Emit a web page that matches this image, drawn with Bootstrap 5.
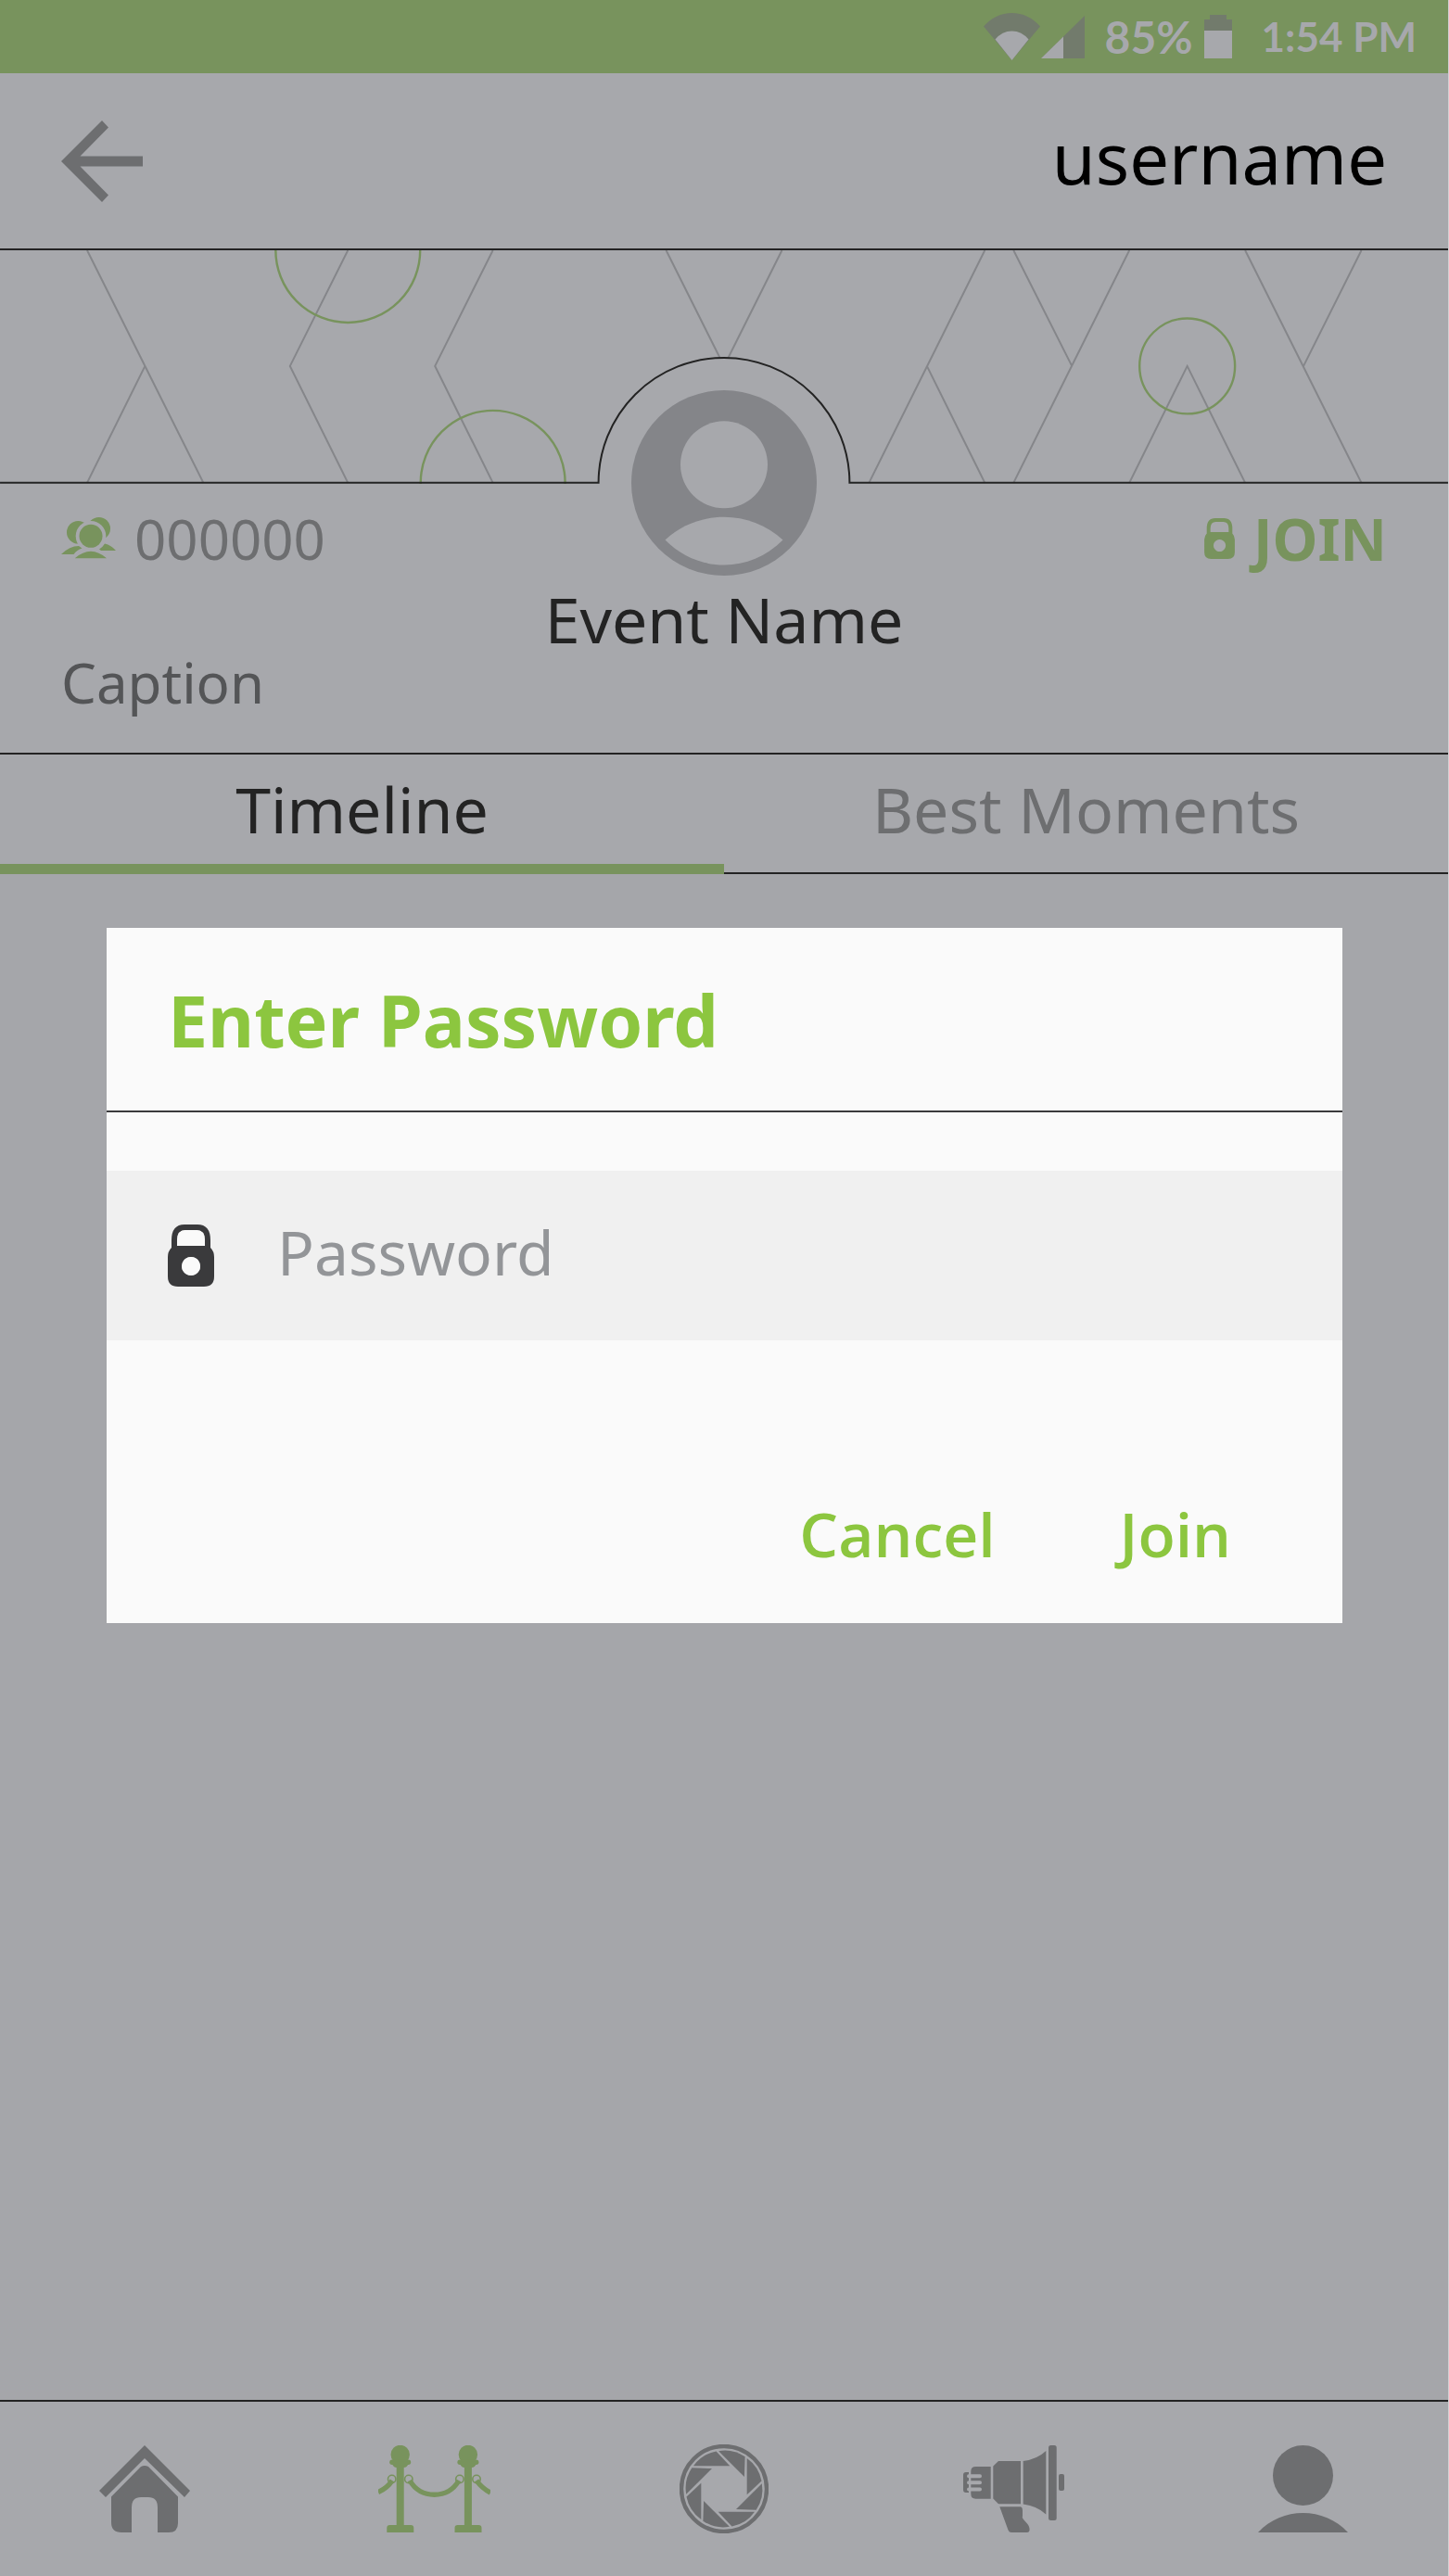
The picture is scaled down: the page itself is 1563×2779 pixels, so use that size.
<!DOCTYPE html>
<html lang="en">
<head>
<meta charset="utf-8">
<meta name="viewport" content="width=device-width, initial-scale=1">
<title>Event</title>
<link href="https://cdn.jsdelivr.net/npm/bootstrap@5.3.0/dist/css/bootstrap.min.css" rel="stylesheet">
<style>
  :root {
    --shade: #a7a8ac;
    --moss: #78935d;
    --ink: #232323;
    --slate: #6d6e70;
    --lime: #8cc63f;
  }
  body { font-family: "Noto Sans", "Open Sans", sans-serif; background: #a5a6aa; border-right: 1px solid #d0d1d3; font-size: 68px; line-height: 92px; color: var(--ink); }
  svg { display: block; flex: none; }
  .surface { background: var(--shade); }
  .gutter { padding-left: 66px; padding-right: 66px; }
  .status-strip { height: 79px; padding-right: 34px; background: var(--moss); color: var(--shade); font: 700 44px/79px Lato, sans-serif; }
  .status-level { margin-left: 22px; margin-right: 12px; font-size: 48px; }
  .status-time { margin-left: 32px; }
  .title-bar { height: 191px; border-bottom: 2px solid var(--ink); }
  .user-title { font-size: 76px; line-height: 92px; color: #000; }
  .plain-btn { background: none; border: 0; padding: 0; color: inherit; font: inherit; }
  .banner-art { width: 100%; height: auto; }
  .side-cell { flex: 1 1 0; gap: 20px; height: 118px; font-size: 60px; }
  .count-text { color: var(--slate); }
  .join-btn { gap: 20px; color: var(--moss); font-size: 62px; font-weight: 700; }
  .avatar-art { margin-top: -101px; margin-bottom: -100px; }
  .event-title { font-size: 68px; line-height: 56px; }
  .caption-text { font-size: 60px; line-height: 80px; color: #545557; padding-bottom: 36px; }
  .tab-strip { border-top: 2px solid var(--ink); }
  .tab-strip .nav-link { font-size: 68px; line-height: 118px; padding: 0 0 9px; border-radius: 0; border-bottom: 2px solid var(--ink); color: var(--slate); }
  .tab-strip .nav-link.active { padding-bottom: 0; border-bottom: 11px solid var(--moss); color: var(--ink); }
  .password-card { margin: 58px 114px 0 115px; background: #fafafa; }
  .password-head { height: 199px; border-bottom: 2px solid #3a3a3c; }
  .password-head h2 { font-size: 77px; line-height: 92px; color: var(--lime); }
  .password-row { margin-top: 63px; height: 183px; gap: 68px; background: #f0f0f0; }
  .password-row .form-control { font-size: 66px; line-height: 92px; padding: 0 0 8px; color: #3a3a3c; }
  .password-row .form-control::placeholder { color: #939598; opacity: 1; }
  .password-actions { padding: 162px 120px 51px; gap: 134px; font-family: "Open Sans", sans-serif; font-size: 66px; font-weight: 600; color: var(--lime); }
  .bottom-nav { height: 190px; border-top: 2px solid var(--ink); }
  .bottom-nav .nav-link { padding: 0; color: var(--slate); }
  .bottom-nav .nav-link.active { color: var(--moss); }
</style>
</head>
<body>
<div class="d-flex flex-column min-vh-100">

  <div class="status-strip d-flex align-items-center justify-content-end">
    <svg width="62" height="51" viewBox="0 0 62 51" aria-hidden="true"><path d="M0 14.500Q13 0 30.500 0T61 14.500L30.500 51z" fill="#727b6c"/><path d="M12.500 28.500Q20 19.500 30.500 19.500T48.500 28.500L30.500 51z" fill="#a7a8ac"/></svg>
    <svg width="47" height="46" viewBox="0 0 47 46" aria-hidden="true"><path d="M47 0V46H0z" fill="#727b6c"/><path d="M24 22.500V46H0z" fill="#a7a8ac"/></svg>
    <span class="status-level">85%</span>
    <svg width="30" height="47" viewBox="0 0 30 47" aria-hidden="true"><path d="M6 0H24V5H30V17H0V5H6z" fill="#727b6c"/><path d="M0 17H30V47H0z" fill="#a7a8ac"/></svg>
    <span class="status-time">1:54 PM</span>
  </div>

  <header class="title-bar surface gutter d-flex align-items-center justify-content-between">
    <button type="button" class="plain-btn" aria-label="Back">
      <svg width="88" height="88" viewBox="0 0 88 88"><path d="M44 0L51 7.500L20.500 38.500H88V49.500H20.500L51 80.500L44 88L0 44z" fill="#6d6e70"/></svg>
    </button>
    <h1 class="user-title fw-normal mb-0 pb-2">username</h1>
  </header>

  <section class="surface">
    <svg class="banner-art" viewBox="0 0 1563 252" aria-hidden="true">
      <g fill="none" stroke="#85868a" stroke-width="2">
        <path d="M94 0L219.500 251M156.500 125L94 251M375.500 0L313 125L375.500 251M532 0L469.500 125L532 251M719 0L781.500 125L844 0"/>
        <path d="M1063 0L938 251M1000.500 125L1063 251M1094 0L1157 125M1219 0L1094 251M1219 251L1281.500 125L1344 251M1344 0L1469.500 251M1469.500 0L1407 125"/>
      </g>
      <g fill="none" stroke="#78935d" stroke-width="2.400">
        <circle cx="375.500" cy="0" r="78"/>
        <circle cx="532" cy="251" r="78"/>
        <circle cx="1281.500" cy="125" r="51.500"/>
      </g>
      <path d="M646 252A135.500 135.500 0 0 1 917 252z" fill="#a7a8ac"/>
      <path d="M0 251H646A135.500 135 0 0 1 917 251H1563" fill="none" stroke="#232323" stroke-width="2"/>
    </svg>
    <div class="gutter">
      <div class="d-flex align-items-start">
        <div class="side-cell d-flex align-items-center count-text">
          <svg width="59" height="45" viewBox="0 0 59 45" aria-hidden="true">
            <g fill="#78935d"><circle cx="18.300" cy="16.300" r="12.300"/><circle cx="40.700" cy="12.300" r="12.300"/></g>
            <circle cx="32" cy="20.300" r="16.300" fill="#a7a8ac"/>
            <g fill="#78935d"><circle cx="32" cy="20.300" r="12.500"/><path d="M14.700 44.300Q32 29.300 49 44.300zM0 40Q9 31 19 31L22.500 33.500Q17 35 13.500 40zM59 36Q54 30 47 28.500Q45 32 41 34.500L43 36z"/></g>
          </svg>
          <span>000000</span>
        </div>
        <svg class="avatar-art" width="200" height="200" viewBox="0 0 200 200" role="img" aria-label="Event picture"><circle cx="100" cy="100" r="100" fill="#848589"/><g fill="#a7a8ac"><circle cx="100" cy="80.300" r="47"/><path d="M36.500 161.500C72 128.500 128 128.500 163.500 161.500C128 197.500 72 197.500 36.500 161.500z"/></g></svg>
        <div class="side-cell d-flex align-items-center justify-content-end">
          <button type="button" class="plain-btn join-btn d-flex align-items-center">
            <svg width="33" height="44" viewBox="0 0 50 67" aria-hidden="true"><path fill="currentColor" fill-rule="evenodd" d="M4 25V17Q4 0 18 0H32Q46 0 46 17V25Q50 29 50 35V56Q50 67 39 67H11Q0 67 0 56V35Q0 29 4 25zM10 23H40V17Q40 6 31 6H19Q10 6 10 17zM25 35a10 10 0 1 0 .1 0z"/></svg>
            <span>JOIN</span>
          </button>
        </div>
      </div>
      <h2 class="event-title fw-normal text-center mb-0">Event Name</h2>
      <p class="caption-text mb-0">Caption</p>
    </div>
    <nav class="tab-strip nav nav-justified" aria-label="Event sections">
      <a class="nav-link active w-50" aria-current="page" href="#timeline">Timeline</a>
      <a class="nav-link w-50" href="#best">Best Moments</a>
    </nav>
  </section>

  <main class="flex-grow-1" id="timeline">
    <form class="password-card" role="dialog" aria-labelledby="password-title">
      <div class="password-head gutter d-flex align-items-center">
        <h2 id="password-title" class="fw-bold mb-0 pt-1">Enter Password</h2>
      </div>
      <div class="password-row gutter d-flex align-items-center">
        <label for="event-password" aria-label="Password"><svg width="50" height="67" viewBox="0 0 50 67" aria-hidden="true"><path fill="#3a3a3c" fill-rule="evenodd" d="M4 25V17Q4 0 18 0H32Q46 0 46 17V25Q50 29 50 35V56Q50 67 39 67H11Q0 67 0 56V35Q0 29 4 25zM10 23H40V17Q40 6 31 6H19Q10 6 10 17zM25 35a10 10 0 1 0 .1 0z"/><path d="M10 23H40V17Q40 6 31 6H19Q10 6 10 17z" fill="#fafafa"/><circle cx="25" cy="45" r="10" fill="#fafafa"/></svg></label>
        <input id="event-password" type="password" class="form-control bg-transparent border-0 rounded-0 shadow-none" placeholder="Password">
      </div>
      <div class="password-actions d-flex justify-content-end">
        <button type="button" class="plain-btn">Cancel</button>
        <button type="submit" class="plain-btn">Join</button>
      </div>
    </form>
  </main>

  <nav class="bottom-nav surface nav nav-fill nav-justified align-items-center" aria-label="Main">
    <a class="nav-link d-flex justify-content-center" href="#home" aria-label="Home">
      <svg width="98" height="94" viewBox="0 0 98 94" fill="currentColor"><path d="M49 0L98 49L92 56L49 14L7 56L0 49z"/><path d="M13 55.500L45 23Q49 21 53 23L85 55.500V84Q85 94 75 94H63V67Q63 56 53 56H45Q35 56 35 67V94H24Q13 94 13 83z"/></svg>
    </a>
    <a class="nav-link active d-flex justify-content-center" href="#events" aria-label="Events">
      <svg width="121" height="94" viewBox="0 0 121 94" fill="currentColor">
        <g id="post"><circle cx="23.700" cy="10" r="10.200"/><rect x="12.200" y="15.500" width="23" height="5.500" rx="2.700"/><path d="M15 20H32.500Q31 24 27.700 24V86H35Q38.300 86 38.300 89V94H9.300V89Q9.300 86 12.500 86H19.700V24Q16.500 24 15 20z"/><g fill="none" stroke="currentColor" stroke-width="1.600"><circle cx="14.700" cy="36.500" r="4.200"/><circle cx="32.800" cy="36.500" r="4.200"/></g></g>
        <use href="#post" x="73.200"/>
        <path d="M0 50.500Q10 46 15 38M34 38Q43 53.300 60.500 53.300T87 38M106 38Q112 46.500 121 51" fill="none" stroke="currentColor" stroke-width="5.400"/>
      </svg>
    </a>
    <a class="nav-link d-flex justify-content-center" href="#camera" aria-label="Camera">
      <svg width="96" height="96" viewBox="0 0 96 96" fill="currentColor">
        <circle cx="48" cy="48" r="46" fill="none" stroke="currentColor" stroke-width="4.400"/>
        <path id="blade" d="M15 23.300H54.300L39.500 7.500Q24 10.500 15 23.300z"/>
        <use href="#blade" transform="rotate(45 48 48)"/><use href="#blade" transform="rotate(90 48 48)"/><use href="#blade" transform="rotate(135 48 48)"/><use href="#blade" transform="rotate(180 48 48)"/><use href="#blade" transform="rotate(225 48 48)"/><use href="#blade" transform="rotate(270 48 48)"/><use href="#blade" transform="rotate(315 48 48)"/>
      </svg>
    </a>
    <a class="nav-link d-flex justify-content-center" href="#news" aria-label="Announcements">
      <svg width="109" height="94" viewBox="0 0 109 94" fill="currentColor">
        <path d="M6 29V51H3Q0 51 0 48V32Q0 29 3 29zM29.700 23V57.700H13.500Q8.300 57.700 8.300 52.500V28Q8.300 23 13.500 23zM38 17H62V63.300H38L32.300 57.500V22.500zM64.700 17Q80 15 89.300 6V74.500Q80 65.500 64.700 63.500zM39.300 66.300H62Q64 67 64 70V76Q63 78 65 80L69 84.500Q72 88 71.500 92Q71 94 69 94H52Q49.500 94 48.500 91.500z"/>
        <rect x="92" y="0" width="8.700" height="81" rx="2.500"/><rect x="103" y="31" width="6" height="18" rx="2"/>
        <path d="M6 33.200H18M6 40.300H18M6 47.500H18" stroke="#a7a8ac" stroke-width="4" stroke-linecap="round"/>
      </svg>
    </a>
    <a class="nav-link d-flex justify-content-center" href="#profile" aria-label="Profile">
      <svg width="97" height="94" viewBox="0 0 97 94" fill="currentColor"><circle cx="48.500" cy="32.500" r="32.500"/><path d="M0 94C26 66 71 66 97 94z"/></svg>
    </a>
  </nav>
</div>
<script src="https://cdn.jsdelivr.net/npm/bootstrap@5.3.0/dist/js/bootstrap.bundle.min.js"></script>
</body>
</html>
